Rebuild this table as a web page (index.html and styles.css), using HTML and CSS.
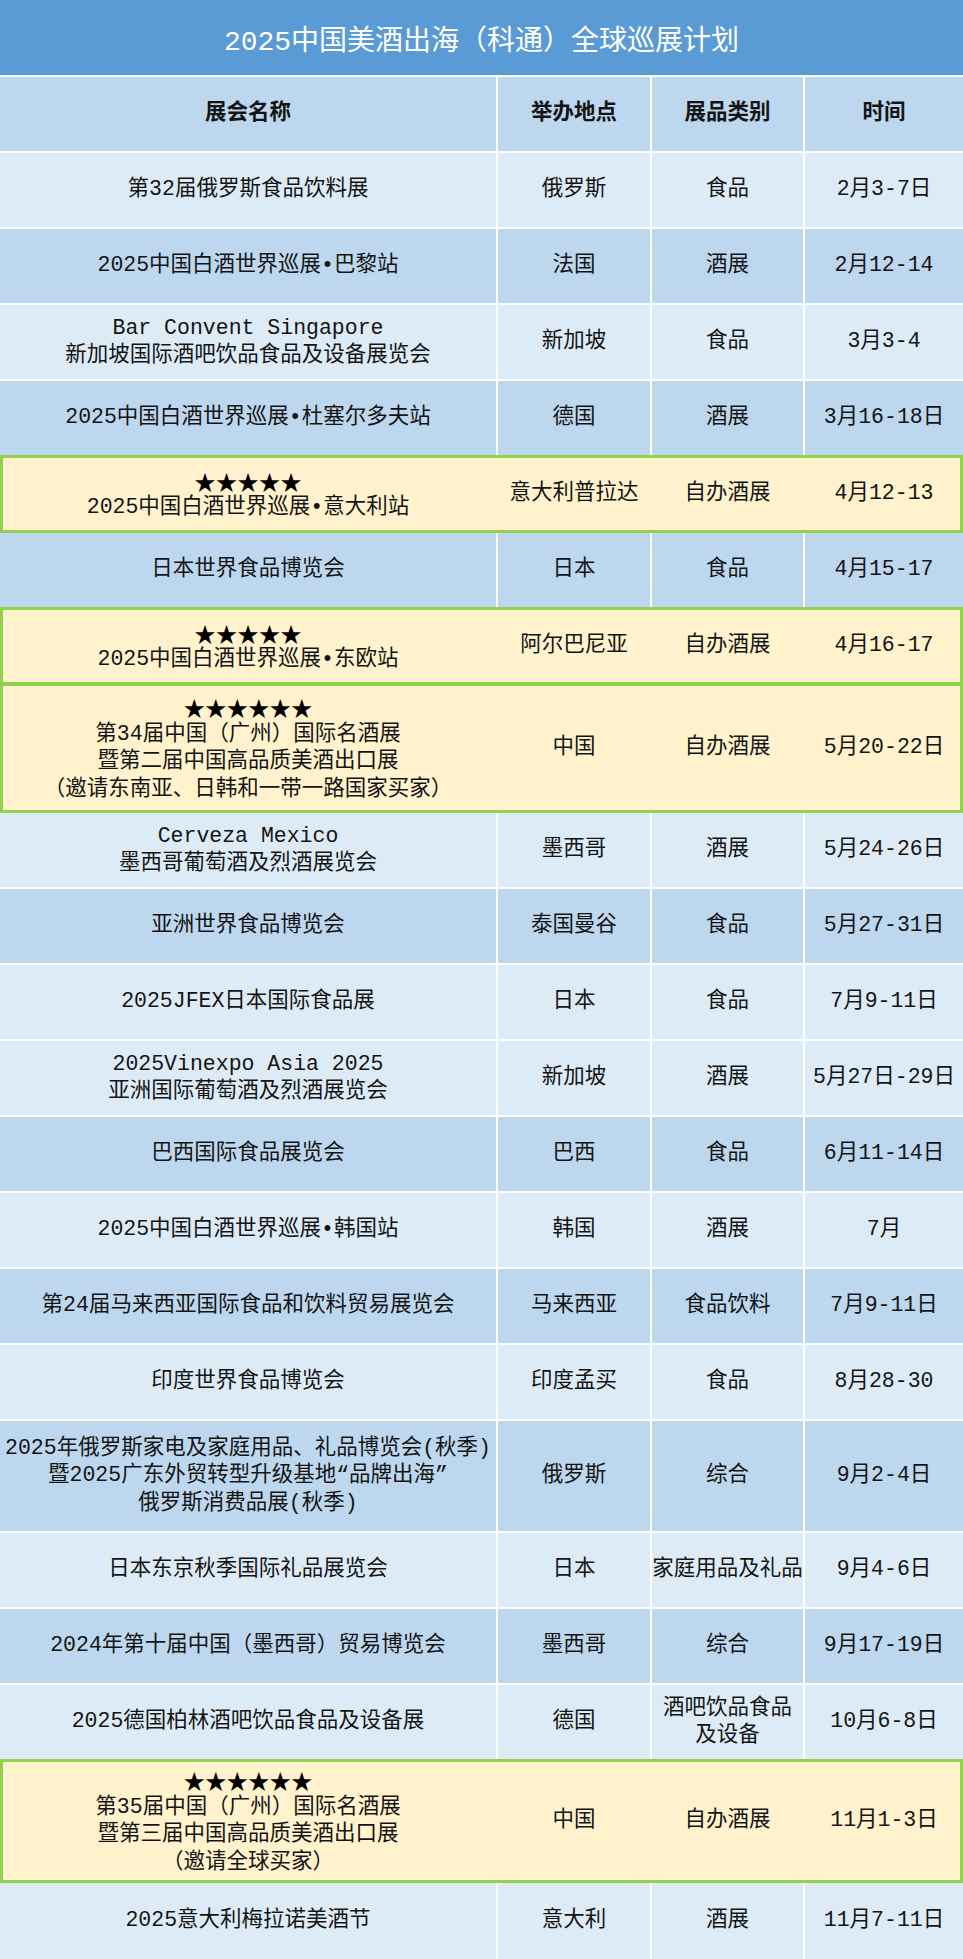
FILE: index.html
```html
<!DOCTYPE html>
<html lang="zh">
<head>
<meta charset="utf-8">
<title>2025中国美酒出海（科通）全球巡展计划</title>
<link rel="stylesheet" href="styles.css">
</head>
<body>
<div class="page">
  <div class="title">2025中国美酒出海（科通）全球巡展计划</div>
  <div class="table">
    <div class="row head">
      <div class="c">展会名称</div><div class="c">举办地点</div><div class="c">展品类别</div><div class="c">时间</div>
    </div>
    <div class="row">
      <div class="c">第32届俄罗斯食品饮料展</div><div class="c">俄罗斯</div><div class="c">食品</div><div class="c">2月3-7日</div>
    </div>
    <div class="row alt">
      <div class="c">2025中国白酒世界巡展•巴黎站</div><div class="c">法国</div><div class="c">酒展</div><div class="c">2月12-14</div>
    </div>
    <div class="row">
      <div class="c">Bar Convent Singapore<br>新加坡国际酒吧饮品食品及设备展览会</div><div class="c">新加坡</div><div class="c">食品</div><div class="c">3月3-4</div>
    </div>
    <div class="row alt">
      <div class="c">2025中国白酒世界巡展•杜塞尔多夫站</div><div class="c">德国</div><div class="c">酒展</div><div class="c">3月16-18日</div>
    </div>
    <div class="row hl">
      <div class="c"><span class="stars">★★★★★</span>2025中国白酒世界巡展•意大利站</div><div class="c">意大利普拉达</div><div class="c">自办酒展</div><div class="c">4月12-13</div>
    </div>
    <div class="row alt">
      <div class="c">日本世界食品博览会</div><div class="c">日本</div><div class="c">食品</div><div class="c">4月15-17</div>
    </div>
    <div class="row hl">
      <div class="c"><span class="stars">★★★★★</span>2025中国白酒世界巡展•东欧站</div><div class="c">阿尔巴尼亚</div><div class="c">自办酒展</div><div class="c">4月16-17</div>
    </div>
    <div class="row hl tall4">
      <div class="c"><span class="stars">★★★★★★</span>第34届中国（广州）国际名酒展<br>暨第二届中国高品质美酒出口展<br>（邀请东南亚、日韩和一带一路国家买家）</div><div class="c">中国</div><div class="c">自办酒展</div><div class="c">5月20-22日</div>
    </div>
    <div class="row">
      <div class="c">Cerveza Mexico<br>墨西哥葡萄酒及烈酒展览会</div><div class="c">墨西哥</div><div class="c">酒展</div><div class="c">5月24-26日</div>
    </div>
    <div class="row alt">
      <div class="c">亚洲世界食品博览会</div><div class="c">泰国曼谷</div><div class="c">食品</div><div class="c">5月27-31日</div>
    </div>
    <div class="row">
      <div class="c">2025JFEX日本国际食品展</div><div class="c">日本</div><div class="c">食品</div><div class="c">7月9-11日</div>
    </div>
    <div class="row">
      <div class="c">2025Vinexpo Asia 2025<br>亚洲国际葡萄酒及烈酒展览会</div><div class="c">新加坡</div><div class="c">酒展</div><div class="c">5月27日-29日</div>
    </div>
    <div class="row alt">
      <div class="c">巴西国际食品展览会</div><div class="c">巴西</div><div class="c">食品</div><div class="c">6月11-14日</div>
    </div>
    <div class="row">
      <div class="c">2025中国白酒世界巡展•韩国站</div><div class="c">韩国</div><div class="c">酒展</div><div class="c">7月</div>
    </div>
    <div class="row alt">
      <div class="c">第24届马来西亚国际食品和饮料贸易展览会</div><div class="c">马来西亚</div><div class="c">食品饮料</div><div class="c">7月9-11日</div>
    </div>
    <div class="row">
      <div class="c">印度世界食品博览会</div><div class="c">印度孟买</div><div class="c">食品</div><div class="c">8月28-30</div>
    </div>
    <div class="row alt tall3">
      <div class="c">2025年俄罗斯家电及家庭用品、礼品博览会(秋季)<br>暨2025广东外贸转型升级基地“品牌出海”<br>俄罗斯消费品展(秋季)</div><div class="c">俄罗斯</div><div class="c">综合</div><div class="c">9月2-4日</div>
    </div>
    <div class="row">
      <div class="c">日本东京秋季国际礼品展览会</div><div class="c">日本</div><div class="c">家庭用品及礼品</div><div class="c">9月4-6日</div>
    </div>
    <div class="row alt">
      <div class="c">2024年第十届中国（墨西哥）贸易博览会</div><div class="c">墨西哥</div><div class="c">综合</div><div class="c">9月17-19日</div>
    </div>
    <div class="row">
      <div class="c">2025德国柏林酒吧饮品食品及设备展</div><div class="c">德国</div><div class="c">酒吧饮品食品<br>及设备</div><div class="c">10月6-8日</div>
    </div>
    <div class="row hl tall4b">
      <div class="c"><span class="stars">★★★★★★</span>第35届中国（广州）国际名酒展<br>暨第三届中国高品质美酒出口展<br>（邀请全球买家）</div><div class="c">中国</div><div class="c">自办酒展</div><div class="c">11月1-3日</div>
    </div>
    <div class="row last">
      <div class="c">2025意大利梅拉诺美酒节</div><div class="c">意大利</div><div class="c">酒展</div><div class="c">11月7-11日</div>
    </div>
  </div>
</div>
</body>
</html>
```

FILE: styles.css
```css
html, body {
  margin: 0;
  padding: 0;
  background: #ffffff;
}

.page {
  width: 963px;
  font-family: "Liberation Mono", "Noto Sans CJK SC", monospace;
  color: #141414;
}

.title {
  height: 75px;
  background: #5b9bd5;
  color: #ffffff;
  font-size: 28px;
  display: flex;
  align-items: center;
  justify-content: center;
}

.table {
  margin-top: 2px;
  display: flex;
  flex-direction: column;
  gap: 2px;
  background: #ffffff;
}

.row {
  display: grid;
  grid-template-columns: 496px 152px 151px 1fr;
  column-gap: 2px;
  height: 74px;
  background: #ffffff;
  font-size: 21.5px;
  line-height: 27.5px;
}

.c {
  display: flex;
  flex-direction: column;
  align-items: center;
  justify-content: center;
  text-align: center;
  white-space: nowrap;
  background: #ddebf7;
}

.row.alt .c,
.row.head .c {
  background: #bdd7ee;
}

.row.head {
  font-weight: bold;
}

.row.tall3 {
  height: 110px;
}

.row.last {
  height: 76px;
}

.row.hl {
  height: 78px;
  margin: -2px 0;
  background: #fff2cc;
  box-shadow: inset 0 0 0 3px #92d050;
}

.row.hl .c {
  background: transparent;
}

.row.hl.tall4 {
  height: 130px;
}

.row.hl.tall4b {
  height: 124px;
}

.stars {
  display: block;
  font-family: "Noto Sans CJK SC", sans-serif;
  color: #000000;
}
```
